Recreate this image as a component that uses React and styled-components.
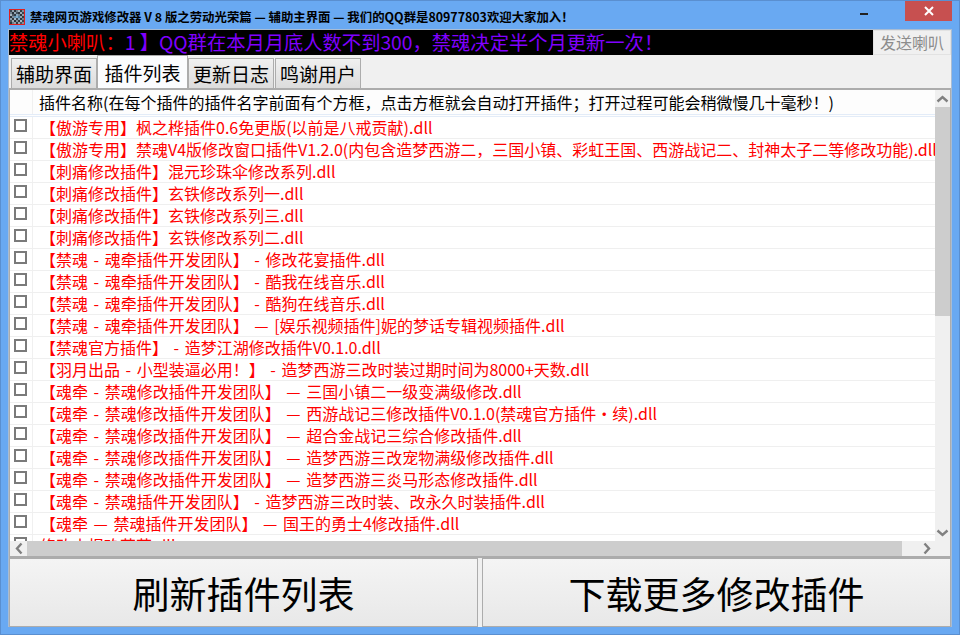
import styled, { createGlobalStyle } from 'styled-components'

const rows = [
    '【傲游专用】枫之桦插件0.6免更版(以前是八戒贡献).dll',
    '【傲游专用】禁魂V4版修改窗口插件V1.2.0(内包含造梦西游二，三国小镇、彩虹王国、西游战记二、封神太子二等修改功能).dll',
    '【刺痛修改插件】混元珍珠伞修改系列.dll',
    '【刺痛修改插件】玄铁修改系列一.dll',
    '【刺痛修改插件】玄铁修改系列三.dll',
    '【刺痛修改插件】玄铁修改系列二.dll',
    '【禁魂 - 魂牵插件开发团队】 - 修改花宴插件.dll',
    '【禁魂 - 魂牵插件开发团队】 - 酷我在线音乐.dll',
    '【禁魂 - 魂牵插件开发团队】 - 酷狗在线音乐.dll',
    '【禁魂 - 魂牵插件开发团队】 — [娱乐视频插件]妮的梦话专辑视频插件.dll',
    '【禁魂官方插件】 - 造梦江湖修改插件V0.1.0.dll',
    '【羽月出品 - 小型装逼必用！】 - 造梦西游三改时装过期时间为8000+天数.dll',
    '【魂牵 - 禁魂修改插件开发团队】 — 三国小镇二一级变满级修改.dll',
    '【魂牵 - 禁魂修改插件开发团队】 — 西游战记三修改插件V0.1.0(禁魂官方插件·续).dll',
    '【魂牵 - 禁魂修改插件开发团队】 — 超合金战记三综合修改插件.dll',
    '【魂牵 - 禁魂修改插件开发团队】 — 造梦西游三改宠物满级修改插件.dll',
    '【魂牵 - 禁魂修改插件开发团队】 — 造梦西游三炎马形态修改插件.dll',
    '【魂牵 - 禁魂插件开发团队】 - 造梦西游三改时装、改永久时装插件.dll',
    '【魂牵 — 禁魂插件开发团队】 — 国王的勇士4修改插件.dll',
    '修改小报玖花花.dll',
]

const iconCells = [
    '#3a4650', '#8ea0ac', '#2c363e', '#6f818d', '#a7b6c0', '#323c44', '#7c8e9a',
    '#6f818d', '#28323a', '#93a5b1', '#46545e', '#2c363e', '#98aab6', '#3a4650',
    '#a7b6c0', '#4c5a64', '#323c44', '#86a8c0', '#6f818d', '#28323a', '#8ea0ac',
    '#2c363e', '#7c8e9a', '#5f8fb0', '#7fb0d0', '#4f7f9f', '#93a5b1', '#323c44',
    '#8ea0ac', '#323c44', '#a7b6c0', '#3a4650', '#86a8c0', '#2c363e', '#6f818d',
    '#46545e', '#98aab6', '#28323a', '#7c8e9a', '#323c44', '#a7b6c0', '#3a4650',
    '#2c363e', '#6f818d', '#8ea0ac', '#323c44', '#93a5b1', '#46545e', '#7c8e9a',
]

const App = () => (
    <>
        <GlobalStyle />
        <Win>
            <TitleBar>
                <AppIcon>
                    <svg width="14" height="14" viewBox="0 0 7 7" shapeRendering="crispEdges">
                        {iconCells.map((c, i) => (
                            <rect key={i} x={i % 7} y={Math.floor(i / 7)} width="1" height="1" fill={c} />
                        ))}
                    </svg>
                </AppIcon>
                <Title>禁魂网页游戏修改器 V 8 版之劳动光荣篇 — 辅助主界面 — 我们的QQ群是80977803欢迎大家加入！</Title>
                <MinBtn />
                <CloseBtn>
                    <svg width="10" height="10" viewBox="0 0 10 10">
                        <path d="M1 1 L9 9 M9 1 L1 9" stroke="#fff" strokeWidth="2" />
                    </svg>
                </CloseBtn>
            </TitleBar>
            <Client>
                <Marquee>
                    <MarqueeText>
                        <Red>禁魂小喇叭：</Red>
                        <Violet>1 】QQ群在本月月底人数不到300，禁魂决定半个月更新一次！</Violet>
                    </MarqueeText>
                    <SendBtn>发送喇叭</SendBtn>
                </Marquee>
                <Tabs>
                    <Tab>辅助界面</Tab>
                    <Tab $active>插件列表</Tab>
                    <Tab>更新日志</Tab>
                    <Tab>鸣谢用户</Tab>
                </Tabs>
                <ListFrame>
                    <ListBody>
                        <Head>
                            <CheckCol />
                            <HeadText>插件名称(在每个插件的插件名字前面有个方框，点击方框就会自动打开插件；打开过程可能会稍微慢几十毫秒！)</HeadText>
                        </Head>
                        <Rows>
                            {rows.map(r => (
                                <Row key={r}>
                                    <CheckCol><Check /></CheckCol>
                                    <RowText>{r}</RowText>
                                </Row>
                            ))}
                        </Rows>
                    </ListBody>
                    <VScroll>
                        <ArrowBox>
                            <svg width="13" height="8" viewBox="0 0 13 8">
                                <path d="M1.5 6.5 L6.5 2 L11.5 6.5" fill="none" stroke="#808080" strokeWidth="2.4" />
                            </svg>
                        </ArrowBox>
                        <VThumb />
                        <VTrack />
                        <ArrowBox>
                            <svg width="13" height="8" viewBox="0 0 13 8">
                                <path d="M1.5 1.5 L6.5 6 L11.5 1.5" fill="none" stroke="#808080" strokeWidth="2.4" />
                            </svg>
                        </ArrowBox>
                    </VScroll>
                    <HScroll>
                        <HArrow>
                            <svg width="8" height="13" viewBox="0 0 8 13">
                                <path d="M6.5 1.5 L2 6.5 L6.5 11.5" fill="none" stroke="#808080" strokeWidth="2.4" />
                            </svg>
                        </HArrow>
                        <HThumb />
                        <HArrow>
                            <svg width="8" height="13" viewBox="0 0 8 13">
                                <path d="M1.5 1.5 L6 6.5 L1.5 11.5" fill="none" stroke="#808080" strokeWidth="2.4" />
                            </svg>
                        </HArrow>
                    </HScroll>
                    <Corner />
                </ListFrame>
                <Buttons>
                    <BigBtn>刷新插件列表</BigBtn>
                    <BigBtn>下载更多修改插件</BigBtn>
                </Buttons>
            </Client>
        </Win>
    </>
)

export default App

const GlobalStyle = createGlobalStyle`
    html, body {
        margin: 0;
        padding: 0;
        background: #69a9f2;
    }
    * {
        box-sizing: border-box;
    }
`

const cjk = `"Noto Sans CJK SC", "Liberation Sans", sans-serif`

const Win = styled.div`
    width: 960px;
    height: 635px;
    background: #69a9f2;
    border: 1px solid #5a8fd0;
    padding: 0 7px 7px 7px;
    display: flex;
    flex-direction: column;
    font-family: "Liberation Sans", "Noto Sans CJK SC", sans-serif;
    overflow: hidden;
`

const TitleBar = styled.div`
    height: 28px;
    display: flex;
    align-items: flex-start;
    flex-shrink: 0;
`

const AppIcon = styled.div`
    width: 16px;
    height: 16px;
    margin: 8px 5px 0 1px;
    border: 1px solid #e02020;
    background: #3a4650;
    display: flex;
`

const Title = styled.div`
    flex: 1;
    margin-top: 7px;
    font-size: 12.4px;
    line-height: 18px;
    font-weight: 700;
    color: #000;
    font-family: ${cjk};
    white-space: nowrap;
`

const MinBtn = styled.div`
    width: 8px;
    height: 2px;
    margin: 12px 37px 0 0;
    background: #222;
`

const CloseBtn = styled.div`
    width: 47px;
    height: 20px;
    background: #c75050;
    display: flex;
    align-items: center;
    justify-content: center;
`

const Client = styled.div`
    flex: 1;
    min-height: 0;
    display: flex;
    flex-direction: column;
    background: #f0f0f0;
    border: 1px solid #a9bcd3;
    border-bottom: none;
`

const Marquee = styled.div`
    height: 25px;
    display: flex;
    flex-shrink: 0;
    background: #000;
`

const MarqueeText = styled.div`
    flex: 1;
    font-size: 19.3px;
    line-height: 25px;
    font-family: ${cjk};
    white-space: nowrap;
`

const Red = styled.span`
    color: #ff0000;
`

const Violet = styled.span`
    color: #8000ff;
`

const SendBtn = styled.div`
    width: 78px;
    background: #f0f0f0;
    border: 1px solid #e2e2e2;
    color: #8c8c8c;
    font-size: 16px;
    line-height: 23px;
    text-align: center;
    font-family: ${cjk};
`

const Tabs = styled.div`
    height: 33px;
    display: flex;
    align-items: flex-end;
    padding-left: 2px;
    flex-shrink: 0;
`

const Tab = styled.div`
    height: ${p => (p.$active ? 33 : 30)}px;
    width: ${p => (p.$active ? 91 : 86)}px;
    margin-right: ${p => (p.$active ? 0 : 1)}px;
    margin-left: ${p => (p.$active ? -1 : 0)}px;
    position: relative;
    z-index: ${p => (p.$active ? 1 : 0)};
    border: 1px solid #acacac;
    border-bottom: none;
    background: ${p => (p.$active ? '#fbfcfe' : 'linear-gradient(#f0f0f0, #dcdcdc)')};
    font-size: 19px;
    line-height: ${p => (p.$active ? 33 : 29)}px;
    text-align: center;
    font-family: ${cjk};
    color: #000;
    white-space: nowrap;
`

const ListFrame = styled.div`
    flex: 1;
    min-height: 0;
    display: grid;
    grid-template-columns: 1fr 15px;
    grid-template-rows: 1fr 15px;
    border: 1px solid #acacac;
    border-top-width: 2px;
    border-bottom-width: 2px;
    background: #fff;
`

const ListBody = styled.div`
    min-width: 0;
    overflow: hidden;
`

const Head = styled.div`
    height: 27px;
    display: flex;
    align-items: center;
    border-bottom: 3px double #e3ecf8;
    background: #fdfdfd;
`

const CheckCol = styled.div`
    width: 23px;
    flex-shrink: 0;
    align-self: stretch;
    border-right: 1px solid #f0f0f0;
    display: flex;
    align-items: center;
    padding-left: 4px;
`

const HeadText = styled.div`
    margin-left: 6px;
    font-size: 16px;
    font-family: ${cjk};
    color: #000;
    white-space: nowrap;
`

const Rows = styled.div`
    display: flex;
    flex-direction: column;
`

const Row = styled.div`
    height: 22px;
    flex-shrink: 0;
    display: flex;
    align-items: center;
    border-bottom: 1px solid #efefef;
`

const Check = styled.div`
    width: 13px;
    height: 13px;
    margin-top: -4px;
    border: 2px solid #7a7a7a;
    background: #fff;
`

const RowText = styled.div`
    margin-left: 7px;
    margin-top: -1px;
    font-size: 16px;
    word-spacing: 2px;
    color: #ff0000;
    font-family: ${cjk};
    white-space: nowrap;
`

const VScroll = styled.div`
    display: flex;
    flex-direction: column;
    background: #f0f0f0;
`

const ArrowBox = styled.div`
    height: 17px;
    flex-shrink: 0;
    display: flex;
    align-items: center;
    justify-content: center;
`

const VThumb = styled.div`
    height: 209px;
    flex-shrink: 0;
    background: #cdcdcd;
`

const VTrack = styled.div`
    flex: 1;
`

const HScroll = styled.div`
    display: grid;
    grid-template-columns: 17px 1fr 17px;
    background: #f0f0f0;
`

const HArrow = styled.div`
    display: flex;
    align-items: center;
    justify-content: center;
`

const HThumb = styled.div`
    background: #cdcdcd;
    margin-right: 16px;
`

const Corner = styled.div`
    background: #f0f0f0;
`

const Buttons = styled.div`
    height: 69px;
    flex-shrink: 0;
    display: grid;
    grid-template-columns: 469px 1fr;
    gap: 4px;
    background: #f0f0f0;
`

const BigBtn = styled.div`
    border: 1px solid #acacac;
    background: linear-gradient(#f4f4f4, #e8e8e8);
    font-size: 37px;
    color: #000;
    display: flex;
    align-items: center;
    justify-content: center;
    font-family: ${cjk};
    white-space: nowrap;
`
